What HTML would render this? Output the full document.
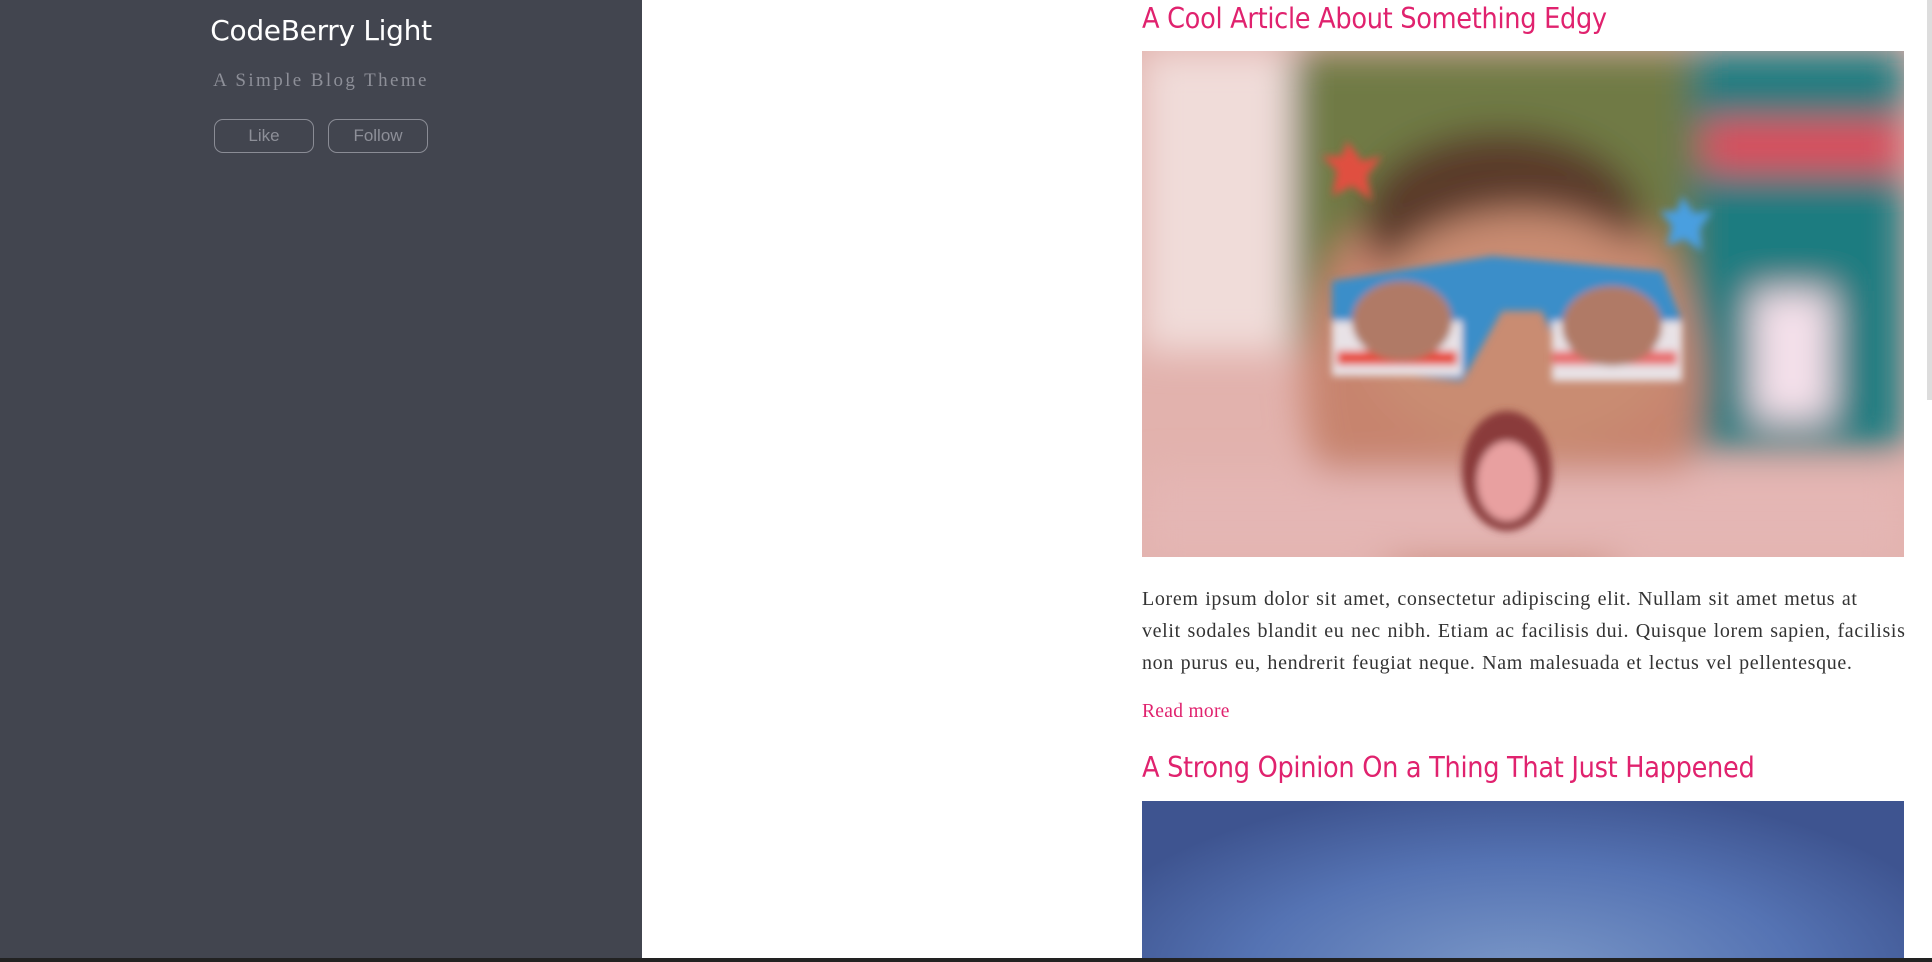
<!DOCTYPE html>
<html><head><meta charset="utf-8"><style>
*{margin:0;padding:0;box-sizing:border-box}
html,body{width:1932px;height:962px;overflow:hidden;background:#fff}
.side{position:absolute;left:0;top:0;width:642px;height:962px;background:#42454f;text-align:center}
.side h1{position:absolute;top:14px;left:0;width:642px;font:400 28px "DejaVu Sans","Liberation Sans",sans-serif;color:#fff;letter-spacing:-0.3px}
.side .sub{position:absolute;top:70px;left:0;width:642px;font:400 19px "Liberation Serif",serif;color:#8d8f98;letter-spacing:2.4px}
.btn{position:absolute;top:119px;width:100px;height:34px;border:1px solid #8a8c95;border-radius:9px;color:#8d8f98;font:17px "Liberation Sans",sans-serif;line-height:32px;text-align:center}
.main{position:absolute;left:1142px;width:762px}
h2{font:400 28.5px "DejaVu Sans Condensed","Liberation Sans Narrow","Liberation Sans",sans-serif;color:#e0226e;letter-spacing:-0.3px;white-space:nowrap}
p{font:20px/32px "Liberation Serif",serif;color:#333;letter-spacing:0.65px;word-spacing:1px;white-space:nowrap}
a{font:19.5px "Liberation Serif",serif;color:#e0226e;text-decoration:none;letter-spacing:0.3px}
.sb{position:absolute;right:0;top:0;width:5px;height:400px;background:#ddd}
.bot{position:absolute;left:0;top:958px;width:1932px;height:4px;background:#222}
</style></head><body>
<div class="side">
<h1>CodeBerry Light</h1>
<div class="sub">A Simple Blog Theme</div>
<div class="btn" style="left:214px">Like</div>
<div class="btn" style="left:328px">Follow</div>
</div>
<h2 class="main" style="top:0px;line-height:38px">A Cool Article About Something Edgy</h2>
<svg class="main" style="top:51px" width="762" height="506" viewBox="0 0 762 506">
<defs>
<filter id="b"><feGaussianBlur stdDeviation="18"/></filter>
<filter id="b2"><feGaussianBlur stdDeviation="4"/></filter>
</defs>
<rect width="762" height="506" fill="#e2b2ad"/>
<g filter="url(#b)">
<rect x="0" y="0" width="180" height="300" fill="#f0dcd9"/>
<rect x="150" y="0" width="420" height="300" fill="#6f7a45"/>
<rect x="550" y="0" width="212" height="400" fill="#1f7c80"/>
<rect x="560" y="70" width="200" height="50" fill="#e04a5a"/>
<rect x="610" y="240" width="80" height="130" fill="#f4e0ea"/>
<ellipse cx="360" cy="330" rx="200" ry="230" fill="#c7846e"/>
<ellipse cx="360" cy="170" rx="140" ry="90" fill="#5a3a2a"/>
<ellipse cx="380" cy="280" rx="160" ry="120" fill="#c98c72"/>
<rect x="0" y="420" width="762" height="90" fill="#e4b6b4"/>
</g>
<g filter="url(#b2)">
<path d="M190 230 L350 205 L520 220 L540 270 L520 330 L430 330 L400 260 L360 260 L320 330 L220 320 L190 280 Z" fill="#3a8ec9"/>
<rect x="190" y="270" width="130" height="55" fill="#e8e2e6"/>
<rect x="410" y="270" width="130" height="60" fill="#e8e2e6"/>
<rect x="195" y="300" width="120" height="14" fill="#e84a3a"/>
<rect x="410" y="300" width="125" height="14" fill="#e87070"/>
<ellipse cx="260" cy="270" rx="50" ry="40" fill="#b07a66"/>
<ellipse cx="470" cy="275" rx="50" ry="40" fill="#b07a66"/>
<polygon points="205,90 220,110 240,105 225,125 230,150 210,135 190,145 195,120 180,105 200,105" fill="#e0503f"/>
<polygon points="540,145 552,162 570,160 558,178 560,200 542,188 525,195 530,175 518,160 535,160" fill="#4a9fe0"/>
<ellipse cx="365" cy="420" rx="45" ry="60" fill="#8a3a3a"/>
<ellipse cx="365" cy="430" rx="30" ry="40" fill="#e8a0a0"/>
</g>
</svg>
<p class="main" style="top:583px">Lorem ipsum dolor sit amet, consectetur adipiscing elit. Nullam sit amet metus at<br>velit sodales blandit eu nec nibh. Etiam ac facilisis dui. Quisque lorem sapien, facilisis<br>non purus eu, hendrerit feugiat neque. Nam malesuada et lectus vel pellentesque.</p>
<a class="main" style="top:701px">Read more</a>
<h2 class="main" style="top:749px;line-height:38px">A Strong Opinion On a Thing That Just Happened</h2>
<div class="main" style="top:801px;height:160px;background:radial-gradient(ellipse 60% 120% at 50% 110%,#7b98c8,#5573b3 60%,#3e5490)"></div>
<div class="sb"></div>
<div class="bot"></div>
</body></html>
